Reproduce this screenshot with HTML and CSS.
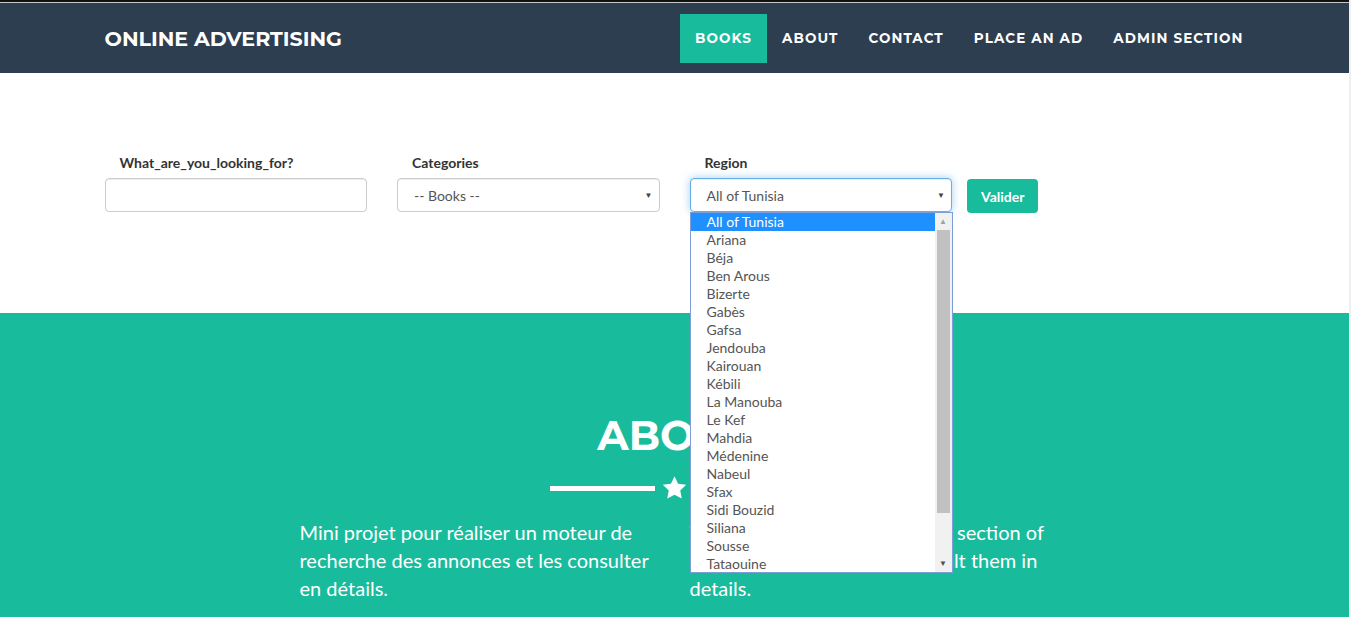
FILE: index.html
```html
<!DOCTYPE html>
<html>
<head>
<meta charset="utf-8">
<title>Online Advertising</title>
<link rel="stylesheet" href="styles.css">
</head>
<body>
<div class="topline"></div>
<nav class="navbar">
  <div class="container nav-inner">
    <a class="brand" href="#">Online Advertising</a>
    <ul class="nav-links">
      <li><a class="active" href="#">Books</a></li>
      <li><a href="#">About</a></li>
      <li><a href="#">Contact</a></li>
      <li><a href="#">Place an ad</a></li>
      <li><a href="#">Admin Section</a></li>
    </ul>
  </div>
</nav>

<section class="search">
  <div class="container search-row">
    <div class="col">
      <label class="lbl">What_are_you_looking_for?</label>
      <input class="field" type="text">
    </div>
    <div class="col">
      <label class="lbl">Categories</label>
      <div class="select">-- Books --<span class="caret">▼</span></div>
    </div>
    <div class="col region">
      <label class="lbl">Region</label>
      <div class="select focused">All of Tunisia<span class="caret">▼</span></div>
      <div class="dropdown">
        <ul class="options">
          <li class="sel">All of Tunisia</li>
          <li>Ariana</li>
          <li>Béja</li>
          <li>Ben Arous</li>
          <li>Bizerte</li>
          <li>Gabès</li>
          <li>Gafsa</li>
          <li>Jendouba</li>
          <li>Kairouan</li>
          <li>Kébili</li>
          <li>La Manouba</li>
          <li>Le Kef</li>
          <li>Mahdia</li>
          <li>Médenine</li>
          <li>Nabeul</li>
          <li>Sfax</li>
          <li>Sidi Bouzid</li>
          <li>Siliana</li>
          <li>Sousse</li>
          <li>Tataouine</li>
          <li>Tozeur</li>
          <li>Tunis</li>
          <li>Zaghouan</li>
        </ul>
        <div class="sbar">
          <div class="arrow up">▲</div>
          <div class="track"><div class="thumb"></div></div>
          <div class="arrow down">▼</div>
        </div>
      </div>
    </div>
    <div class="col col-btn">
      <button class="btn">Valider</button>
    </div>
  </div>
</section>

<section class="about">
  <h2>About</h2>
  <div class="star-divider">
    <span class="seg"></span>
    <svg class="star" viewBox="0 0 24 24" width="27" height="26"><path fill="#fff" d="M12 1.2l3.3 6.9 7.5 1-5.5 5.2 1.4 7.5L12 18.2l-6.7 3.6 1.4-7.5L1.2 9.1l7.5-1z"/></svg>
    <span class="seg"></span>
  </div>
  <div class="container about-row">
    <p>Mini projet pour réaliser un moteur de recherche des annonces et les consulter en détails.</p>
    <p>This project also has an admin section of ads to manage, edit and consult them in details.</p>
  </div>
</section>
</body>
</html>
```

FILE: styles.css
```css
* { box-sizing: border-box; }
html { background: #f0f0f0; }
body {
  margin: 0 2px 0 0;
  background: #fff;
  font-family: Lato, "Open Sans", sans-serif;
  color: #2c3e50;
  height: 617px;
  overflow: hidden;
}
.topline {
  height: 3px;
  background: #111;
  border-bottom: 1px solid #c8c8c8;
}
.container {
  width: 1170px;
  margin: 0 auto;
  padding: 0 15px;
}
.navbar {
  background: #2c3e50;
  height: 70px;
}
.nav-inner {
  display: flex;
  align-items: center;
  justify-content: space-between;
  height: 70px;
}
.brand {
  font-family: Montserrat, "DejaVu Sans", sans-serif;
  font-weight: 700;
  font-size: 20.6px;
  color: #fff;
  text-decoration: none;
  text-transform: uppercase;
}
.nav-links {
  list-style: none;
  margin: 0 -14px 0 0;
  padding: 0;
  display: flex;
  align-items: center;
}
.nav-links a {
  display: block;
  padding: 15px 15px;
  line-height: 19px;
  font-family: Montserrat, "DejaVu Sans", sans-serif;
  font-weight: 700;
  font-size: 13.5px;
  letter-spacing: 1.1px;
  text-transform: uppercase;
  color: #fff;
  text-decoration: none;
}
.nav-links a.active { background: #18bc9c; }

.search {
  padding: 80px 0 100px;
}
.search-row {
  display: flex;
  margin: 0 auto;
  padding: 0;
}
.col {
  width: 292.5px;
  padding: 0 15px;
  position: relative;
}
.col-btn { padding-left: 0; }
.lbl {
  display: block;
  padding-left: 15px;
  font-weight: 700;
  font-size: 14px;
  line-height: 20px;
  color: #333;
  margin-bottom: 5px;
}
.field, .select {
  display: block;
  width: 100%;
  height: 34px;
  border: 1px solid #ccc;
  border-radius: 4px;
  box-shadow: inset 0 1px 1px rgba(0,0,0,.075);
  font-family: Lato, sans-serif;
  font-size: 14px;
  color: #555;
  background: #fff;
}
.select {
  position: relative;
  padding: 0 16px;
  line-height: 33px;
}
.select.focused {
  border-color: #66afe9;
  box-shadow: inset 0 1px 1px rgba(0,0,0,.075), 0 0 8px rgba(102,175,233,.6);
}
.caret {
  position: absolute;
  right: 6px;
  top: 0;
  font-size: 8px;
  color: #444;
}
.btn {
  margin-top: 26px;
  height: 34px;
  padding: 0 14px;
  border: 0;
  border-radius: 4px;
  background: #18bc9c;
  color: #fff;
  font-family: Lato, sans-serif;
  font-weight: 700;
  font-size: 14px;
}
.dropdown {
  position: absolute;
  left: 15px;
  top: 59px;
  width: 263px;
  height: 361px;
  background: #fff;
  border: 1px solid #7f9ed6;
  display: flex;
  z-index: 10;
}
.options {
  list-style: none;
  margin: 0;
  padding: 0;
  flex: 1;
  overflow: hidden;
}
.options li {
  height: 18px;
  line-height: 18px;
  padding-left: 16px;
  font-size: 14px;
  color: #555;
  white-space: nowrap;
}
.options li.sel {
  background: #1e90ff;
  color: #fff;
}
.sbar {
  width: 17px;
  background: #f1f1f1;
  display: flex;
  flex-direction: column;
}
.arrow {
  height: 17px;
  font-size: 8px;
  line-height: 17px;
  text-align: center;
}
.arrow.up { color: #a3a3a3; }
.arrow.down { color: #505050; }
.track {
  flex: 1;
  padding: 0 2px;
}
.thumb {
  height: 283px;
  background: #c1c1c1;
}

.about {
  background: #18bc9c;
  color: #fff;
  padding: 96px 0 40px;
}
.about h2 {
  margin: 0;
  text-align: center;
  font-family: Montserrat, "DejaVu Sans", sans-serif;
  font-weight: 700;
  font-size: 41px;
  line-height: 52px;
  text-transform: uppercase;
}
.star-divider {
  display: flex;
  justify-content: center;
  align-items: center;
  gap: 6px;
  margin: 14px 0 17px;
}
.seg {
  display: block;
  width: 105px;
  height: 5px;
  background: #fff;
}
.about-row {
  display: flex;
  padding: 0 195px;
}
.about-row p {
  width: 390px;
  flex: none;
  margin: 0;
  padding: 0 15px;
  font-size: 20px;
  line-height: 28px;
}
```
